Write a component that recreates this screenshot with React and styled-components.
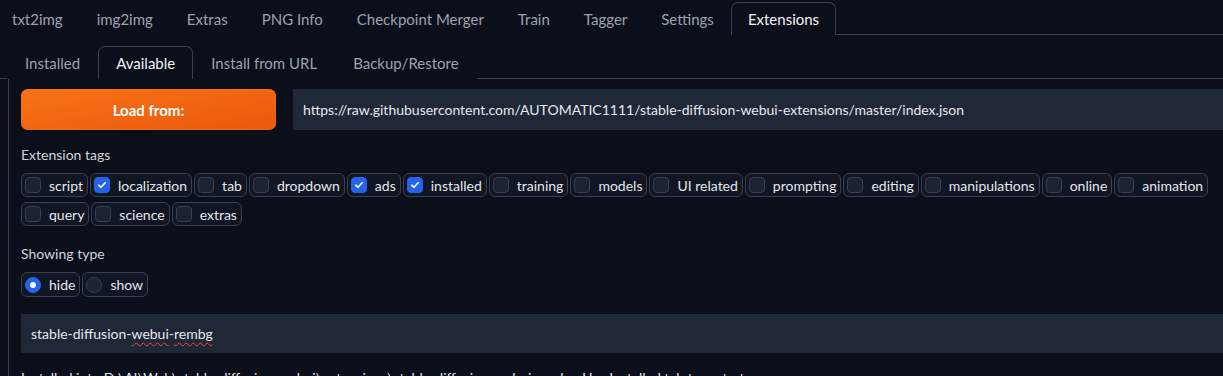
import React from 'react'
import styled, { createGlobalStyle } from 'styled-components'

const Global = createGlobalStyle`
  html, body {
    margin: 0;
    padding: 0;
    background: #0b0f19;
    overflow: hidden;
  }
  body {
    font-family: "Lato", "Liberation Sans", sans-serif;
    color: #d1d5db;
  }
`

const Page = styled.div`
  width: 1240px;
  padding-top: 2px;
`

const TabBar = styled.div`
  display: flex;
  height: 32px;
  border-bottom: 1px solid #374151;
  padding-left: ${({ inset }) => Math.max(inset, 0)}px;
  & > :first-child {
    margin-left: ${({ inset }) => Math.min(inset, 0)}px;
  }
`

const Tab = styled.div`
  display: flex;
  align-items: center;
  padding: 0 ${({ pad }) => pad}px;
  font-size: 15px;
  color: ${({ active }) => (active ? '#f3f4f6' : '#9ca3af')};
  border: 1px solid ${({ active }) => (active ? '#374151' : 'transparent')};
  border-bottom: none;
  border-radius: 7px 7px 0 0;
  background: #0b0f19;
  margin-bottom: -1px;
  position: relative;
  white-space: nowrap;
`

const SubTabs = styled(TabBar)`
  margin-top: 11px;
`

const Panel = styled.div`
  margin-left: 8px;
  border-left: 1px solid #374151;
  padding: 10px 0 0 12px;
  display: flex;
  flex-direction: column;
`

const LoadRow = styled.div`
  display: flex;
  gap: 17px;
  height: 41px;
`

const LoadButton = styled.button`
  width: 255px;
  border: none;
  border-radius: 7px;
  background: linear-gradient(to bottom right, #f97316, #ea580c);
  color: #fff;
  font-family: inherit;
  font-weight: 700;
  font-size: 15px;
  box-shadow: inset 0 0 0 1px #f9731688;
`

const UrlField = styled.div`
  flex: 1;
  background: #202837;
  display: flex;
  align-items: center;
  padding: 0 10px;
  font-size: 14px;
  color: #e5e7eb;
`

const Label = styled.div`
  font-size: 14px;
  color: #d1d5db;
  margin-top: ${({ top }) => top}px;
  height: 18px;
  line-height: 18px;
`

const ChipWrap = styled.div`
  display: flex;
  flex-wrap: wrap;
  gap: 5px 2px;
  margin-top: ${({ top }) => top}px;
  width: 1215px;
`

const Chip = styled.label`
  display: flex;
  align-items: center;
  gap: 8px;
  height: ${({ tall }) => (tall ? 25 : 24)}px;
  padding: 0 4px 0 3px;
  border: 1px solid #374151;
  border-radius: 6px;
  background: #111624;
  font-size: 14px;
  color: #e5e7eb;
  box-sizing: border-box;
  white-space: nowrap;
`

const Box = styled.span`
  width: 16px;
  height: 16px;
  box-sizing: border-box;
  border-radius: ${({ round }) => (round ? '50%' : '4px')};
  background: ${({ on }) => (on ? '#2563eb' : '#1b2230')};
  border: 1px solid ${({ on }) => (on ? '#2563eb' : '#374151')};
  display: flex;
  align-items: center;
  justify-content: center;
`

const Dot = styled.span`
  width: 6px;
  height: 6px;
  border-radius: 50%;
  background: #fff;
`

const TextField = styled.div`
  margin-top: 17px;
  height: 39px;
  background: #202837;
  display: flex;
  align-items: center;
  padding: 0 10px;
  font-size: 14px;
  color: #e5e7eb;
`

const Typo = styled.span`
  text-decoration: underline wavy #ef4444;
  text-decoration-thickness: 1px;
  text-underline-offset: 3px;
`

const Status = styled.div`
  margin-top: 16px;
  font-size: 14px;
  line-height: 18px;
  color: #e5e7eb;
  white-space: nowrap;
`

const Check = () => (
  <svg width="10" height="10" viewBox="0 0 10 10">
    <path d="M1.8 5.2 L4 7.3 L8.2 2.8" fill="none" stroke="#fff" strokeWidth="1.6" strokeLinecap="round" strokeLinejoin="round" />
  </svg>
)

const mainTabs = ['txt2img', 'img2img', 'Extras', 'PNG Info', 'Checkpoint Merger', 'Train', 'Tagger', 'Settings', 'Extensions']
const subTabs = ['Installed', 'Available', 'Install from URL', 'Backup/Restore']
const tags = [
  ['script', false], ['localization', true], ['tab', false], ['dropdown', false], ['ads', true],
  ['installed', true], ['training', false], ['models', false], ['UI related', false], ['prompting', false],
  ['editing', false], ['manipulations', false], ['online', false], ['animation', false],
  ['query', false], ['science', false], ['extras', false],
]

export default function App() {
  return (
    <Page>
      <Global />
      <TabBar inset={-5}>
        {mainTabs.map((t) => (
          <Tab key={t} pad={16} active={t === 'Extensions'}>{t}</Tab>
        ))}
      </TabBar>
      <SubTabs inset={7}>
        {subTabs.map((t) => (
          <Tab key={t} pad={17} active={t === 'Available'}>{t}</Tab>
        ))}
      </SubTabs>
      <Panel>
        <LoadRow>
          <LoadButton>Load from:</LoadButton>
          <UrlField>https://raw.githubusercontent.com/AUTOMATIC1111/stable-diffusion-webui-extensions/master/index.json</UrlField>
        </LoadRow>
        <Label top={16}>Extension tags</Label>
        <ChipWrap top={9}>
          {tags.map(([name, on]) => (
            <Chip key={name}>
              <Box on={on}>{on && <Check />}</Box>
              {name}
            </Chip>
          ))}
        </ChipWrap>
        <Label top={19}>Showing type</Label>
        <ChipWrap top={9}>
          <Chip tall><Box round on><Dot /></Box>hide</Chip>
          <Chip tall><Box round /> show</Chip>
        </ChipWrap>
        <TextField>
          stable-diffusion-<Typo>webui</Typo>-<Typo>rembg</Typo>
        </TextField>
        <Status>Installed into D:\AI\Web\stable-diffusion-webui\extensions\stable-diffusion-webui-rembg. Use Installed tab to restart.</Status>
      </Panel>
    </Page>
  )
}
